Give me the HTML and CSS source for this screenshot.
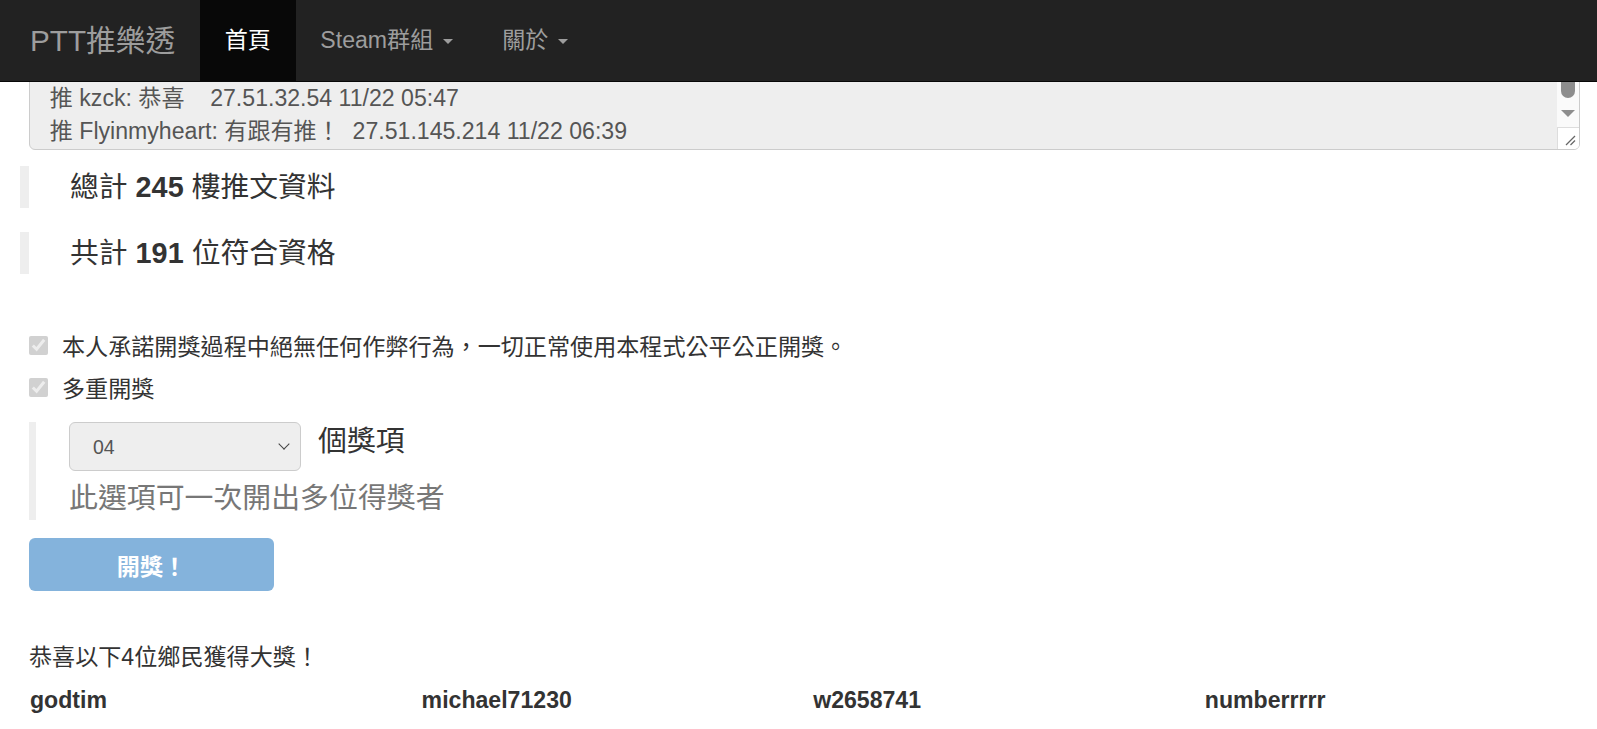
FILE: index.html
```html
<!DOCTYPE html>
<html>
<head>
    <meta charset="utf-8">
    <title>PTT推樂透</title>
    <link rel="stylesheet" href="styles.css">
</head>
<body>
    <!-- Top navigation -->
    <nav class="navbar">
        <a class="brand" href="#">PTT推樂透</a>
        <ul class="nav">
            <li class="active"><a href="#">首頁</a></li>
            <li><a href="#">Steam群組 <span class="caret"></span></a></li>
            <li><a href="#">關於 <span class="caret"></span></a></li>
        </ul>
    </nav>

    <div class="container">
        <!-- Push list (scrollbar drawn on top of the textarea) -->
        <div class="push-wrap">
            <textarea id="pushList" class="push-list" readonly>推 abc1234: 推推    1.163.22.81 11/22 01:12
推 ddrgon: 好人一生平安    114.32.5.66 11/22 02:30
推 peter09: 抽抽    36.231.8.12 11/22 03:05
推 lucky777: 推一個    223.137.40.9 11/22 04:18
推 kzck: 恭喜    27.51.32.54 11/22 05:47
推 Flyinmyheart: 有跟有推！  27.51.145.214 11/22 06:39</textarea>
            <div class="fake-bar">
                <div class="thumb"></div>
                <div class="arrow-box"><span class="arrow"></span></div>
                <div class="corner">
                    <svg width="12" height="12" viewBox="0 0 12 12">
                        <line x1="11" y1="2" x2="2" y2="11" stroke="#666" stroke-width="1.2"/>
                        <line x1="11" y1="6.5" x2="6.5" y2="11" stroke="#666" stroke-width="1.2"/>
                    </svg>
                </div>
            </div>
        </div>

        <blockquote class="summary">總計 <b>245</b> 樓推文資料</blockquote>
        <blockquote class="summary gap">共計 <b>191</b> 位符合資格</blockquote>

        <div class="options">
            <label class="check-row">
                <input type="checkbox" checked disabled>
                <span>本人承諾開獎過程中絕無任何作弊行為，一切正常使用本程式公平公正開獎。</span>
            </label>
            <label class="check-row">
                <input type="checkbox" checked disabled>
                <span>多重開獎</span>
            </label>
        </div>

        <blockquote class="multi">
            <div class="prize-row">
                <div class="select-wrap">
                    <select class="prize-count">
                        <option>01</option>
                        <option>02</option>
                        <option>03</option>
                        <option selected>04</option>
                        <option>05</option>
                    </select>
                </div>
                <span class="prize-label">個獎項</span>
            </div>
            <div class="hint">此選項可一次開出多位得獎者</div>
        </blockquote>

        <button type="button" class="draw-btn" disabled>開獎！</button>

        <p class="result-title">恭喜以下4位鄉民獲得大獎！</p>
        <div class="winners">
            <div class="winner">godtim</div>
            <div class="winner">michael71230</div>
            <div class="winner">w2658741</div>
            <div class="winner">numberrrrr</div>
        </div>
    </div>

    <script>
        // keep the push list scrolled to the newest lines
        const list = document.getElementById('pushList');
        list.scrollTop = list.scrollHeight - list.clientHeight - 9;
    </script>
</body>
</html>
```

FILE: styles.css
```css
body {
    margin: 0;
    font-family: "Liberation Sans", "Noto Sans CJK TC", sans-serif;
    font-size: 23.1px;
    color: #333;
    background: #fff;
}

.navbar {
    position: fixed;
    top: 0;
    left: 0;
    right: 0;
    z-index: 10;
    height: 81px;
    display: flex;
    align-items: stretch;
    background: #222;
    border-bottom: 1px solid #080808;
}

.brand {
    padding: 0 24.75px 0 30px;
    font-size: 29.7px;
    line-height: 81px;
    color: #9d9d9d;
    text-decoration: none;
}

.nav {
    display: flex;
    margin: 0;
    padding: 0;
    list-style: none;
}

.nav li a {
    display: block;
    padding: 0 24.75px;
    font-size: 23.1px;
    line-height: 81px;
    color: #9d9d9d;
    text-decoration: none;
}

.nav li.active a {
    background: #080808;
    color: #fff;
}

.caret {
    display: inline-block;
    width: 0;
    height: 0;
    margin-left: 3px;
    vertical-align: middle;
    border-top: 5.5px solid #9d9d9d;
    border-left: 5.5px solid transparent;
    border-right: 5.5px solid transparent;
}

.container {
    padding: 0 17px 40px 29px;
}

.push-wrap {
    position: relative;
}

.push-list {
    display: block;
    width: 100%;
    height: 150px;
    margin: 0;
    padding: 9.9px 19.8px;
    box-sizing: border-box;
    border: 1px solid #ccc;
    border-radius: 6px;
    background: #eee;
    color: #555;
    font-family: "Liberation Sans", "Noto Sans CJK TC", sans-serif;
    font-size: 23.1px;
    line-height: 33px;
    resize: vertical;
    overflow: hidden;
    white-space: pre;
}

.fake-bar {
    position: absolute;
    top: 1px;
    right: 1px;
    bottom: 1px;
    width: 22px;
    display: flex;
    flex-direction: column;
    justify-content: flex-end;
    background: #fafafa;
    border-radius: 0 5px 5px 0;
}

.thumb {
    height: 60px;
    margin: 0 4px 6px 4px;
    background: #8d8d8d;
    border-radius: 7px;
}

.arrow-box {
    height: 23px;
    display: flex;
    justify-content: center;
    padding-top: 6px;
    box-sizing: border-box;
}

.arrow {
    width: 0;
    height: 0;
    border-top: 7px solid #8d8d8d;
    border-left: 7px solid transparent;
    border-right: 7px solid transparent;
}

.corner {
    height: 22px;
    display: flex;
    align-items: flex-end;
    justify-content: flex-end;
    padding: 0 3px 3px 0;
    box-sizing: border-box;
    background: #fff;
    border-top: 1px solid #ddd;
    border-left: 1px solid #ddd;
    border-radius: 0 0 5px 0;
}

.summary {
    margin: 16px 0 0 -9px;
    padding: 0 0 0 41px;
    height: 42px;
    border-left: 9px solid #eee;
    font-size: 28.8px;
    line-height: 42px;
}

.summary.gap {
    margin-top: 24px;
}

.options {
    margin-top: 50px;
}

.check-row {
    display: flex;
    align-items: center;
    height: 42px;
}

.check-row input {
    width: 19px;
    height: 19px;
    margin: 0 14px 0 0;
}

.multi {
    margin: 14px 0 0 0;
    padding: 0 0 0 33px;
    border-left: 7px solid #eee;
}

.prize-row {
    display: flex;
    align-items: flex-start;
}

.select-wrap {
    position: relative;
}

.select-wrap::after {
    content: "";
    position: absolute;
    right: 13px;
    top: 18px;
    width: 7px;
    height: 7px;
    border-right: 1.8px solid #444;
    border-bottom: 1.8px solid #444;
    transform: rotate(45deg);
    pointer-events: none;
}

.prize-count {
    display: block;
    width: 232px;
    height: 49px;
    padding: 0 12px 0 23px;
    border: 1px solid #ccc;
    border-radius: 6px;
    background: #eee;
    color: #555;
    font-family: "Liberation Sans", sans-serif;
    font-size: 19.5px;
    appearance: none;
    -webkit-appearance: none;
}

.prize-label {
    margin-left: 17px;
    font-size: 28.9px;
    line-height: 38px;
}

.hint {
    padding-top: 5px;
    font-size: 28.9px;
    line-height: 44px;
    color: #777;
}

.draw-btn {
    display: block;
    margin-top: 18px;
    width: 245px;
    height: 53px;
    border: none;
    border-radius: 6px;
    background: #84b3dc;
    color: #fff;
    font-family: "Liberation Sans", "Noto Sans CJK TC", sans-serif;
    font-size: 23.1px;
    font-weight: bold;
}

.result-title {
    margin: 50px 0 0 0;
    line-height: 32px;
}

.winners {
    display: grid;
    grid-template-columns: 391.6px 391.6px 391.6px 1fr;
    margin-top: 11px;
}

.winner {
    padding-left: 1px;
    font-weight: bold;
    line-height: 32px;
}
```
